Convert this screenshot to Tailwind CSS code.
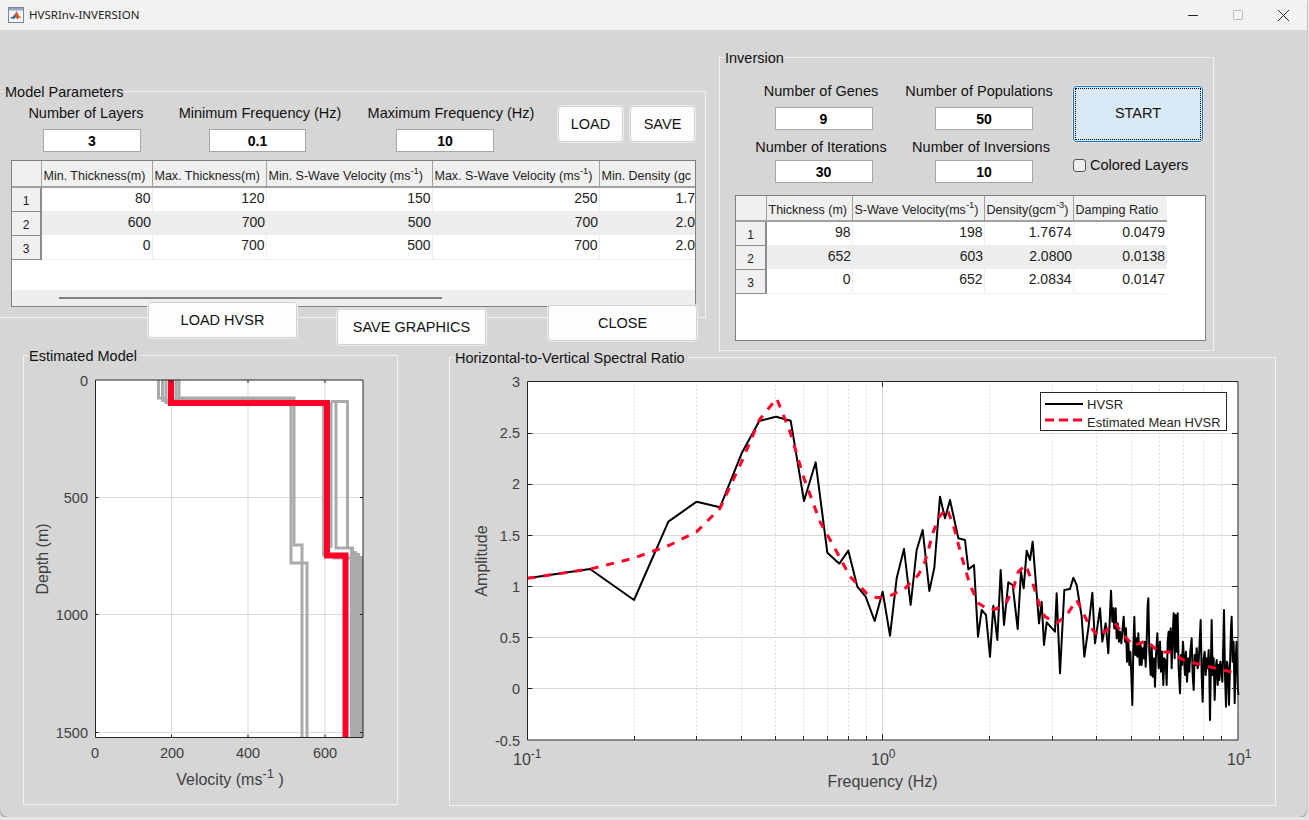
<!doctype html>
<html lang="en">
<head>
<meta charset="UTF-8" />
<title>HVSRInv-INVERSION</title>
<script src="https://cdn.jsdelivr.net/npm/@tailwindcss/browser@4"></script>
</head>
<body class="bg-[#e6e6e6] overflow-hidden">
<div class="w-[1307px] h-[817px] flex flex-col rounded-b-[8px] overflow-hidden bg-[#d6d6d6] shadow-[0_1px_2px_#777] font-['Liberation_Sans',sans-serif] text-[14.5px] text-[#111]">

  <!-- Title bar -->
  <header class="h-[30px] shrink-0 flex items-center bg-[#f2f2f2] pl-[8px]">
    <svg class="w-[16px] h-[16px]" viewBox="0 0 16 16">
      <rect x="0.5" y="0.5" width="15" height="15" fill="#f4f6f8" stroke="#7b8794"/>
      <rect x="1" y="1" width="14" height="2.5" fill="#8fa9c4"/>
      <path d="M2 11l3-1.5 2-2.5 1.500-3 2 4 3 3.500-2.500-1-1.500 2-2-2.500-2 1z" fill="#d9521b"/>
      <path d="M2 11l3-1.500 2-2.500 0.500 4-2 1z" fill="#2a6fb5"/>
    </svg>
    <span class="ml-[5px] font-['Noto_Sans',sans-serif] text-[11.5px] text-[#222]">HVSRInv-INVERSION</span>
    <div class="ml-auto flex items-center">
      <svg class="w-[12px] h-[12px] mr-[33px]" viewBox="0 0 12 12"><path d="M1 6.500h10" stroke="#222" stroke-width="1"/></svg>
      <svg class="w-[12px] h-[12px] mr-[33px]" viewBox="0 0 12 12"><rect x="1.500" y="1.500" width="9" height="9" rx="1" fill="none" stroke="#b9b9b9"/></svg>
      <svg class="w-[13px] h-[13px] mr-[17px]" viewBox="0 0 13 13"><path d="M1 1l11 11M12 1L1 12" stroke="#222" stroke-width="1"/></svg>
    </div>
  </header>

  <main class="relative flex-1 flex flex-col">
    <div class="h-[321px] flex items-start">

      <!-- Model Parameters -->
      <section class="relative -ml-[5px] mt-[61px] w-[711px] h-[227px] border border-[#f3f3ee] pl-[4px] flex flex-col">
        <span class="absolute left-[9px] -top-[8px] pr-[1px] bg-[#d6d6d6] leading-[17px]">Model Parameters</span>
        <div class="flex items-start h-[68px] pt-[13px]">
          <div class="ml-[21px] w-[130px] flex flex-col items-center gap-[7px]">
            <label class="leading-[17px] whitespace-nowrap">Number of Layers</label>
            <input value="3" class="ml-[12px] w-[98px] h-[23px] bg-white border-[1.5px] border-[#a6a6a6] text-center font-bold text-[14px] text-black" />
          </div>
          <div class="ml-[19px] w-[180px] flex flex-col items-center gap-[7px]">
            <label class="leading-[17px] whitespace-nowrap">Minimum Frequency (Hz)</label>
            <input value="0.1" class="mr-[5px] w-[97px] h-[23px] bg-white border-[1.5px] border-[#a6a6a6] text-center font-bold text-[14px] text-black" />
          </div>
          <div class="ml-[11px] w-[180px] flex flex-col items-center gap-[7px]">
            <label class="leading-[17px] whitespace-nowrap">Maximum Frequency (Hz)</label>
            <input value="10" class="mr-[12px] w-[98px] h-[23px] bg-white border-[1.5px] border-[#a6a6a6] text-center font-bold text-[14px] text-black" />
          </div>
          <button class="ml-[17px] mt-[1px] pt-[1px] w-[65px] h-[36px] bg-[#fdfdfd] border border-[#d2d2d2] rounded-[3px] outline outline-[#ececec]">LOAD</button>
          <button class="ml-[7px] mt-[1px] pt-[1px] w-[65px] h-[36px] bg-[#fdfdfd] border border-[#d2d2d2] rounded-[3px] outline outline-[#ececec]">SAVE</button>
        </div>
        <!-- Parameter table -->
        <div class="ml-[11px] w-[685px] h-[147px] border border-[#7f7f7f] flex flex-col bg-white">
          <div class="flex-1 overflow-hidden">
            <table class="table-fixed w-[683px] text-[14px] text-[#222] bg-white">
              <colgroup><col class="w-[29px]"><col class="w-[111px]"><col class="w-[114px]"><col class="w-[166px]"><col class="w-[167px]"><col class="w-[96px]"></colgroup>
              <thead>
                <tr class="h-[26px] bg-[#f0f0f0] text-[12.5px] font-normal text-left">
                  <th class="border-r border-b-2 border-[#a0a0a0]"></th>
                  <th class="font-normal pl-[2px] pt-[5px] whitespace-nowrap overflow-hidden border-r border-b-2 border-[#a0a0a0]">Min. Thickness(m)</th>
                  <th class="font-normal pl-[2px] pt-[5px] whitespace-nowrap overflow-hidden border-r border-b-2 border-[#a0a0a0]">Max. Thickness(m)</th>
                  <th class="font-normal pl-[2px] pt-[5px] whitespace-nowrap overflow-hidden border-r border-b-2 border-[#a0a0a0]">Min. S-Wave Velocity (ms<sup class="-top-[6px]">-1</sup>)</th>
                  <th class="font-normal pl-[2px] pt-[5px] whitespace-nowrap overflow-hidden border-r border-b-2 border-[#a0a0a0]">Max. S-Wave Velocity (ms<sup class="-top-[6px]">-1</sup>)</th>
                  <th class="font-normal pl-[2px] pt-[5px] whitespace-nowrap overflow-hidden border-b-2 border-[#a0a0a0]">Min. Density (gc</th>
                </tr>
              </thead>
              <tbody class="text-right [&_td]:pb-[2px]">
                <tr class="h-[24px]">
                  <td class="bg-[#f0f0f0] border-r-2 border-b border-[#8c8c8c] text-center text-[12px] leading-[14px] pt-[5px]">1</td>
                  <td class="pr-[1px] border-r border-[#eee]">80</td><td class="pr-[1px] border-r border-[#eee]">120</td><td class="pr-[1px] border-r border-[#eee]">150</td><td class="pr-[1px] border-r border-[#eee]">250</td><td>1.7</td>
                </tr>
                <tr class="h-[24px] bg-[#eeeeee]">
                  <td class="bg-[#f0f0f0] border-r-2 border-b border-[#8c8c8c] text-center text-[12px] leading-[14px] pt-[5px]">2</td>
                  <td class="pr-[1px]">600</td><td class="pr-[1px]">700</td><td class="pr-[1px]">500</td><td class="pr-[1px]">700</td><td>2.0</td>
                </tr>
                <tr class="h-[24px] border-b border-[#eee]">
                  <td class="bg-[#f0f0f0] border-r-2 border-b border-[#8c8c8c] text-center text-[12px] leading-[14px] pt-[5px]">3</td>
                  <td class="pr-[1px] border-r border-[#eee]">0</td><td class="pr-[1px] border-r border-[#eee]">700</td><td class="pr-[1px] border-r border-[#eee]">500</td><td class="pr-[1px] border-r border-[#eee]">700</td><td>2.0</td>
                </tr>
              </tbody>
            </table>
          </div>
          <div class="h-[16px] shrink-0 bg-[#eeeeee] pt-[7px] pl-[47px]">
            <div class="w-[383px] h-[2px] bg-[#808080]"></div>
          </div>
        </div>
      </section>

      <!-- Inversion -->
      <section class="relative ml-[13px] mt-[27px] w-[495px] h-[294px] border border-[#f3f3ee]">
        <span class="absolute left-[4px] -top-[8px] px-[1px] bg-[#d6d6d6] leading-[17px]">Inversion</span>
        <div class="flex items-start h-[137px]">
          <div class="ml-[31px] mt-[25px] w-[140px] flex flex-col items-center">
            <label class="leading-[17px] whitespace-nowrap">Number of Genes</label>
            <input value="9" class="ml-[5px] mt-[7px] w-[98px] h-[23px] bg-white border-[1.5px] border-[#a6a6a6] text-center font-bold text-[14px] text-black" />
            <label class="mt-[9px] leading-[17px] whitespace-nowrap">Number of Iterations</label>
            <input value="30" class="ml-[5px] mt-[4px] w-[98px] h-[23px] bg-white border-[1.5px] border-[#a6a6a6] text-center font-bold text-[14px] text-black" />
          </div>
          <div class="ml-[8px] mt-[25px] w-[160px] flex flex-col items-center">
            <label class="leading-[17px] whitespace-nowrap">Number of Populations</label>
            <input value="50" class="ml-[10px] mt-[7px] w-[98px] h-[23px] bg-white border-[1.5px] border-[#a6a6a6] text-center font-bold text-[14px] text-black" />
            <label class="ml-[4px] mt-[9px] leading-[17px] whitespace-nowrap">Number of Inversions</label>
            <input value="10" class="ml-[10px] mt-[4px] w-[98px] h-[23px] bg-white border-[1.5px] border-[#a6a6a6] text-center font-bold text-[14px] text-black" />
          </div>
          <div class="ml-[15px] mt-[28px] flex flex-col">
            <button class="relative -ml-[1px] w-[130px] h-[56px] bg-[#d9e9f5] border-[1.5px] border-[#1a76c9] rounded-[3px] outline outline-[#e6e6e6]">
              <span class="absolute inset-[1px] border border-dotted border-black"></span>
              START
            </button>
            <label class="-ml-[1px] mt-[15px] flex items-center whitespace-nowrap leading-[17px]">
              <input type="checkbox" class="appearance-none w-[13px] h-[13px] bg-[#eee] border border-[#555] rounded-[3px]" />
              <span class="ml-[4px]">Colored Layers</span>
            </label>
          </div>
        </div>
        <!-- Result table -->
        <div class="ml-[15px] w-[471px] h-[146px] border border-[#7f7f7f] bg-white overflow-hidden">
          <table class="table-fixed w-[431px] text-[14px] text-[#222]">
            <colgroup><col class="w-[30px]"><col class="w-[86px]"><col class="w-[132px]"><col class="w-[89px]"><col class="w-[94px]"></colgroup>
            <thead>
              <tr class="h-[25px] bg-[#f0f0f0] text-[12.5px] text-left">
                <th class="border-r border-b-2 border-[#a0a0a0]"></th>
                <th class="font-normal pl-[2px] pt-[5px] whitespace-nowrap overflow-hidden border-r border-b-2 border-[#a0a0a0]">Thickness (m)</th>
                <th class="font-normal pl-[2px] pt-[5px] whitespace-nowrap overflow-hidden border-r border-b-2 border-[#a0a0a0]">S-Wave Velocity(ms<sup class="-top-[6px]">-1</sup>)</th>
                <th class="font-normal pl-[2px] pt-[5px] whitespace-nowrap overflow-hidden border-r border-b-2 border-[#a0a0a0]">Density(gcm<sup class="-top-[6px]">-3</sup>)</th>
                <th class="font-normal pl-[2px] pt-[5px] whitespace-nowrap overflow-hidden border-b-2 border-[#a0a0a0]">Damping Ratio</th>
              </tr>
            </thead>
            <tbody class="text-right [&_td]:pb-[2px]">
              <tr class="h-[24px]">
                <td class="bg-[#f0f0f0] border-r-2 border-b border-[#8c8c8c] text-center text-[12px] leading-[14px] pt-[5px]">1</td>
                <td class="pr-[1px] border-r border-[#eee]">98</td><td class="pr-[1px] border-r border-[#eee]">198</td><td class="pr-[1px] border-r border-[#eee]">1.7674</td><td class="pr-[2px]">0.0479</td>
              </tr>
              <tr class="h-[24px] bg-[#eeeeee]">
                <td class="bg-[#f0f0f0] border-r-2 border-b border-[#8c8c8c] text-center text-[12px] leading-[14px] pt-[5px]">2</td>
                <td class="pr-[1px]">652</td><td class="pr-[1px]">603</td><td class="pr-[1px]">2.0800</td><td class="pr-[2px]">0.0138</td>
              </tr>
              <tr class="h-[24px] border-b border-[#eee]">
                <td class="bg-[#f0f0f0] border-r-2 border-b border-[#8c8c8c] text-center text-[12px] leading-[14px] pt-[5px]">3</td>
                <td class="pr-[1px] border-r border-[#eee]">0</td><td class="pr-[1px] border-r border-[#eee]">652</td><td class="pr-[1px] border-r border-[#eee]">2.0834</td><td class="pr-[2px]">0.0147</td>
              </tr>
            </tbody>
          </table>
        </div>
      </section>
    </div>

    <!-- Buttons that sit over the panel edges -->
    <button class="absolute left-[148px] top-[272px] pt-[2px] w-[149px] h-[36px] bg-[#fdfdfd] border border-[#d2d2d2] rounded-[3px] outline outline-[#ececec]">LOAD HVSR</button>
    <button class="absolute left-[337px] top-[279px] pt-[2px] w-[149px] h-[36px] bg-[#fdfdfd] border border-[#d2d2d2] rounded-[3px] outline outline-[#ececec]">SAVE GRAPHICS</button>
    <button class="absolute left-[548px] top-[275px] pt-[2px] w-[149px] h-[36px] bg-[#fdfdfd] border border-[#d2d2d2] rounded-[3px] outline outline-[#ececec]">CLOSE</button>

    <div class="flex items-start mt-[4px]">

      <!-- Estimated Model -->
      <section class="relative ml-[23px] w-[375px] h-[450px] border border-[#f3f3ee]">
        <span class="absolute left-[5px] -top-[8px] pr-[3px] bg-[#d6d6d6] leading-[17px]">Estimated Model</span>
        <svg class="block w-[373px] h-[448px]" viewBox="24 356 373 448">
          <rect x="95" y="380" width="268" height="357.500" fill="#fff"/>
          <path d="M171.500 380V737M248 380V737M325 380V737M95 497.500H363M95 614.500H363M95 732.500H363" stroke="#d9d9d9" fill="none"/>
          <g fill="none" stroke="#aaaaaa" stroke-width="3">
            <path d="M158.500 380V398H165V400H292"/>
            <path d="M162.500 380V400.500H170V403H291V563H307V737"/>
            <path d="M166 380V402.500H180V398H294V545H302V737"/>
            <path d="M179 380V400"/>
            <path d="M176 380V400"/>
            <path d="M323.500 400V555H333"/>
            <path d="M331 401.500H347.500V548"/>
            <path d="M331 402V548"/>
            <path d="M336 402V548H354"/>
            <path d="M333 558H350"/>
          </g>
          <path d="M350 549H354V551H357V553H360V556H363V737.500H350z" fill="#aaaaaa"/>
          <path d="M171 380V403H327V555.500H345.500V737.500" fill="none" stroke="#ff0029" stroke-width="6"/>
          <path d="M95.500 380V737.500H363V380H95.500z" fill="none" stroke="#262626"/>
          <path d="M171.500 737.500v-3M248 737.500v-3M325 737.500v-3M171.500 380v3M248 380v3M325 380v3M95.500 497.500h3M95.500 614.500h3M95.500 732.500h3M363 497.500h-3M363 614.500h-3M363 732.500h-3" stroke="#262626" fill="none"/>
          <g fill="#404040" font-size="14.500" text-anchor="end">
            <text x="88" y="386">0</text>
            <text x="88" y="503">500</text>
            <text x="88" y="620">1000</text>
            <text x="88" y="738">1500</text>
          </g>
          <g fill="#404040" font-size="14.500" text-anchor="middle">
            <text x="95" y="758">0</text>
            <text x="172" y="758">200</text>
            <text x="248" y="758">400</text>
            <text x="325" y="758">600</text>
          </g>
          <text x="230" y="785" fill="#404040" font-size="16" text-anchor="middle">Velocity (ms<tspan font-size="13" dy="-7">-1</tspan><tspan dy="7"> )</tspan></text>
          <text transform="translate(48 559) rotate(-90)" fill="#404040" font-size="16" text-anchor="middle">Depth (m)</text>
        </svg>
      </section>

      <!-- Horizontal-to-Vertical Spectral Ratio -->
      <section class="relative ml-[51px] mt-[2px] w-[827px] h-[449px] border border-[#f3f3ee]">
        <span class="absolute left-[5px] -top-[8px] pr-[3px] bg-[#d6d6d6] leading-[17px]">Horizontal-to-Vertical Spectral Ratio</span>
        <svg class="block w-[825px] h-[447px]" viewBox="450 358 825 447">
          <rect x="527" y="381" width="711" height="359" fill="#fff"/>
          <path d="M527 433.500H1238M527 484.500H1238M527 535.500H1238M527 586.500H1238M527 637.500H1238M527 688.500H1238M882.500 381V740" stroke="#d9d9d9" fill="none"/>
          <path d="M634.500 381V740M696.500 381V740M741.500 381V740M775.500 381V740M803.500 381V740M827.500 381V740M848.500 381V740M866.500 381V740M989.500 381V740M1052.500 381V740M1096.500 381V740M1131.500 381V740M1159.500 381V740M1183.500 381V740M1203.500 381V740M1221.500 381V740" stroke="#c4c4c4" stroke-dasharray="1 3" fill="none"/>
          <g transform="translate(880 375) scale(.33333)" fill="none" stroke-linejoin="round">
            <polyline stroke="#000" stroke-width="6" points="-1058,610 -870,582 -738,675 -670,520 -635,440 -550,380 -480,397 -415,235 -362,138 -312,125 -268,137 -228,378 -193,262 -158,533 -122,566 -95,527 -68,635 -43,665 -16,738 8,650 30,782 50,610 72,522 92,690 110,525 128,465 148,648 163,578 180,365 195,430 210,375 235,490 255,495 265,583 282,570 294,785 305,705 318,720 330,845 340,692 352,795 362,585 372,750 385,622 398,630 413,762 423,590 431,640 440,527 450,555 458,500 477,745 485,680 492,810 500,742 525,770 530,655 540,895 553,645 570,642 580,608 590,630 605,725 613,845 625,760 637,653 645,805 660,700 667,800 677,745 685,835 693,647 697,740 700,700 703,760 707,700 710,790 713,745 717,800 720,770 724,805 727,770 731,725 735,800 738,760 741,860 745,800 748,870 751,830 754,900 757,990 760,820 763,725 766,840 769,790 772,845 775,775 779,870 782,810 785,870 788,820 791,850 794,800 797,875 800,800 803,690 805,670 808,830 812,900 815,810 818,905 822,850 825,935 828,840 832,775 836,880 840,800 843,890 846,830 850,930 853,850 857,860 860,930 863,800 866,770 869,830 872,760 875,880 878,780 881,715 884,850 887,720 890,830 893,715 896,880 900,955 903,840 906,870 909,800 912,850 915,900 918,830 921,920 925,850 928,890 931,830 935,790 938,900 941,945 944,840 947,870 950,820 953,880 956,860 959,800 962,735 965,900 968,980 971,850 974,830 977,900 980,850 983,880 986,825 988,900 990,1035 993,850 995,735 998,900 1001,850 1004,975 1007,880 1010,855 1013,930 1016,870 1018,915 1021,860 1024,880 1027,920 1030,800 1032,705 1035,900 1038,995 1041,860 1044,880 1047,990 1050,870 1053,760 1055,725 1058,860 1061,800 1064,985 1067,850 1070,800 1073,930 1075,960"/>
            <polyline stroke="#ff0029" stroke-width="9" stroke-dasharray="24 24" points="-1058,610 -870,582 -740,550 -630,510 -550,470 -480,400 -415,260 -362,135 -310,70 -270,170 -228,310 -180,440 -130,530 -90,605 -40,655 -10,668 25,665 75,640 115,600 135,560 160,470 178,425 200,400 220,450 245,545 270,630 295,685 325,703 345,703 378,685 400,640 415,590 437,570 460,630 480,695 495,725 530,745 560,720 590,675 610,715 630,755 655,785 705,745 730,780 760,812 800,797 835,830 875,832 910,855 965,870 1010,880 1070,895"/>
          </g>
          <path d="M527.500 381.500H1238V740H527.500z" fill="none" stroke="#262626"/>
          <path d="M882.500 740v-6M882.500 381v6M634.500 740v-4M696.500 740v-4M741.500 740v-4M775.500 740v-4M803.500 740v-4M827.500 740v-4M848.500 740v-4M866.500 740v-4M989.500 740v-4M1052.500 740v-4M1096.500 740v-4M1131.500 740v-4M1159.500 740v-4M1183.500 740v-4M1203.500 740v-4M1221.500 740v-4M527.500 433.500h5M527.500 484.500h5M527.500 535.500h5M527.500 586.500h5M527.500 637.500h5M527.500 688.500h5M1238 433.500h-6M1238 484.500h-6M1238 535.500h-6M1238 586.500h-6M1238 637.500h-6M1238 688.500h-6" stroke="#262626" fill="none"/>
          <g fill="#404040" font-size="14.500" text-anchor="end">
            <text x="520" y="387">3</text>
            <text x="520" y="438">2.5</text>
            <text x="520" y="489">2</text>
            <text x="520" y="541">1.5</text>
            <text x="520" y="592">1</text>
            <text x="520" y="643">0.5</text>
            <text x="520" y="694">0</text>
            <text x="520" y="746">-0.5</text>
          </g>
          <g fill="#404040" font-size="16">
            <text x="513" y="765">10<tspan font-size="12" dy="-7">-1</tspan></text>
            <text x="871" y="765">10<tspan font-size="12" dy="-7">0</tspan></text>
            <text x="1227" y="765">10<tspan font-size="12" dy="-7">1</tspan></text>
            <text x="882.500" y="787" text-anchor="middle">Frequency (Hz)</text>
            <text transform="translate(487 561) rotate(-90)" text-anchor="middle">Amplitude</text>
          </g>
          <!-- Legend -->
          <rect x="1040.500" y="392.500" width="186" height="38" fill="#fff" stroke="#262626"/>
          <path d="M1045 404h38" stroke="#000" stroke-width="2"/>
          <path d="M1045 420h38" stroke="#ff0029" stroke-width="3" stroke-dasharray="9 5"/>
          <g fill="#262626" font-size="13">
            <text x="1087" y="409">HVSR</text>
            <text x="1087" y="427">Estimated Mean HVSR</text>
          </g>
        </svg>
      </section>
    </div>
  </main>
</div>
</body>
</html>
